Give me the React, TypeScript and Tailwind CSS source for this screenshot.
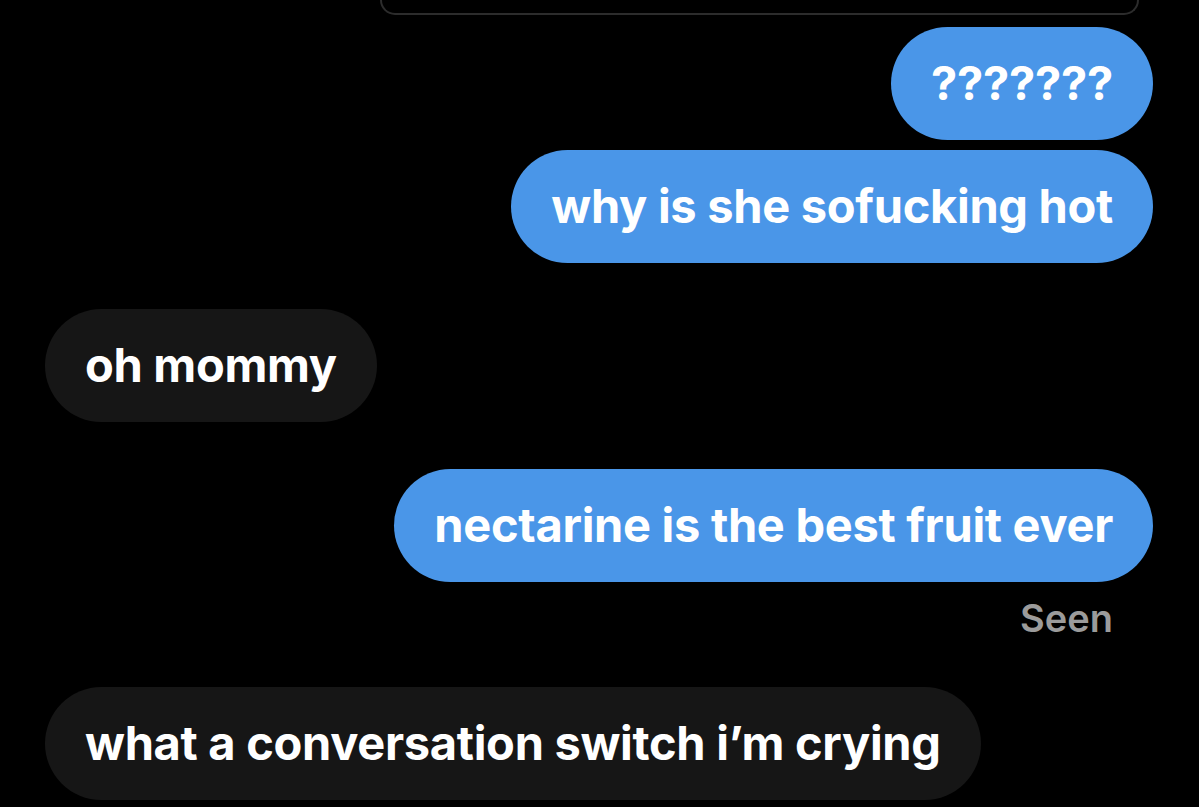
const messages = [
  { id: 1, text: "???????", mine: true },
  { id: 2, text: "why is she sofucking hot", mine: true },
  { id: 3, text: "oh mommy", mine: false },
  { id: 4, text: "nectarine is the best fruit ever", mine: true },
];

function Bubble({ text, mine, className = "" }: { text: string; mine: boolean; className?: string }) {
  return (
    <div
      className={`flex h-[113px] shrink-0 items-center rounded-full px-10 text-[47px] font-bold tracking-[-0.3px] text-white ${
        mine ? "self-end bg-[#4a96e8]" : "self-start bg-[#161616]"
      } ${className}`}
    >
      {text}
    </div>
  );
}

export default function App() {
  return (
    <div
      className="flex h-[807px] w-[1199px] flex-col overflow-hidden bg-black pl-[45px] pr-[46px]"
      style={{ fontFamily: "Inter, 'Open Sans', sans-serif" }}
    >
      {/* bottom edge of the previous message, cut off by the screenshot */}
      <div className="ml-[335px] mr-[14px] h-[15px] shrink-0 rounded-b-[40px] border-x-2 border-b-2 border-[#2c2c2c]" />

      <Bubble text={messages[0].text} mine className="mt-[12px]" />
      <Bubble text={messages[1].text} mine className="mt-[10px]" />
      <Bubble text={messages[2].text} mine={false} className="mt-[46px]" />
      <Bubble text={messages[3].text} mine className="mt-[47px] text-[47.5px]" />

      <div className="mt-[14px] shrink-0 self-end pr-10 text-[38px] font-semibold leading-[44px] text-[#9b9b9b]">Seen</div>

      <Bubble text="what a conversation switch i’m crying" mine={false} className="mt-[47px]" />
    </div>
  );
}
